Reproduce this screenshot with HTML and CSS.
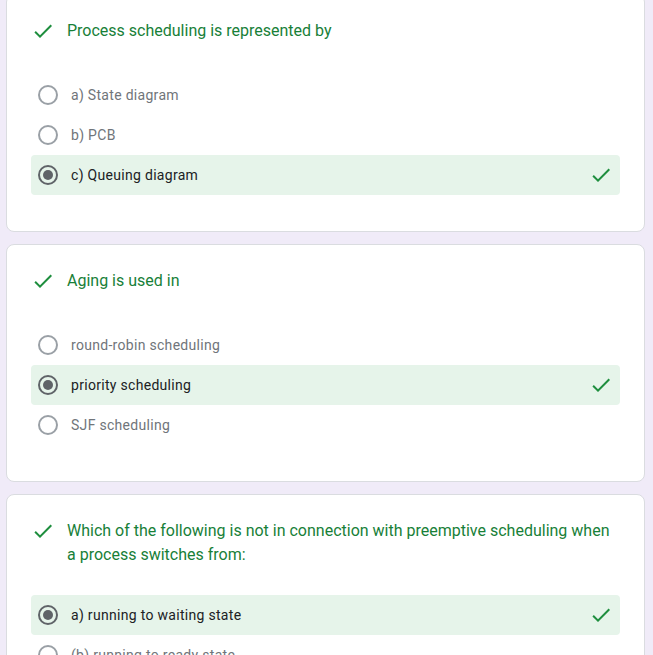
FILE: index.html
```html
<!DOCTYPE html>
<html lang="en">
<head>
<meta charset="utf-8">
<title>Quiz results</title>
<link rel="stylesheet" href="styles.css">
</head>
<body>
<main class="page">
  <section class="card">
    <div class="title">
      <svg class="check" viewBox="0 0 24 24"><path d="M9 16.17L4.83 12l-1.42 1.41L9 19 21 7l-1.41-1.41z"/></svg>
      <span class="title-text">Process scheduling is represented by</span>
    </div>
    <div class="options">
      <div class="option"><span class="radio"></span><span class="label">a) State diagram</span></div>
      <div class="option"><span class="radio"></span><span class="label">b) PCB</span></div>
      <div class="option correct"><span class="radio on"></span><span class="label">c) Queuing diagram</span>
        <svg class="check right" viewBox="0 0 24 24"><path d="M9 16.17L4.83 12l-1.42 1.41L9 19 21 7l-1.41-1.41z"/></svg></div>
    </div>
  </section>

  <section class="card">
    <div class="title">
      <svg class="check" viewBox="0 0 24 24"><path d="M9 16.17L4.83 12l-1.42 1.41L9 19 21 7l-1.41-1.41z"/></svg>
      <span class="title-text">Aging is used in</span>
    </div>
    <div class="options">
      <div class="option"><span class="radio"></span><span class="label">round-robin scheduling</span></div>
      <div class="option correct"><span class="radio on"></span><span class="label">priority scheduling</span>
        <svg class="check right" viewBox="0 0 24 24"><path d="M9 16.17L4.83 12l-1.42 1.41L9 19 21 7l-1.41-1.41z"/></svg></div>
      <div class="option"><span class="radio"></span><span class="label">SJF scheduling</span></div>
    </div>
  </section>

  <section class="card">
    <div class="title multi">
      <svg class="check" viewBox="0 0 24 24"><path d="M9 16.17L4.83 12l-1.42 1.41L9 19 21 7l-1.41-1.41z"/></svg>
      <span class="title-text">Which of the following is not in connection with preemptive scheduling when a process switches from:</span>
    </div>
    <div class="options">
      <div class="option correct"><span class="radio on"></span><span class="label">a) running to waiting state</span>
        <svg class="check right" viewBox="0 0 24 24"><path d="M9 16.17L4.83 12l-1.42 1.41L9 19 21 7l-1.41-1.41z"/></svg></div>
      <div class="option"><span class="radio"></span><span class="label">(b) running to ready state</span></div>
      <div class="option"><span class="radio"></span><span class="label">(c) waiting to ready</span></div>
      <div class="option"><span class="radio"></span><span class="label">d) running to terminated state</span></div>
    </div>
  </section>
</main>
</body>
</html>
```

FILE: styles.css
```css
html, body {
  margin: 0;
  padding: 0;
  background: #f0ebf8;
  font-family: Roboto, "Noto Sans", Arial, sans-serif;
  overflow: hidden;
}

.page {
  display: flex;
  flex-direction: column;
  gap: 12px;
  margin: -6px 8px 0 6px;
}

.card {
  background: #fff;
  border: 1px solid #dadce0;
  border-radius: 8px;
  padding: 24px 24px 36px 24px;
}

.title {
  display: flex;
  align-items: flex-start;
  gap: 12px;
  margin-bottom: 32px;
  padding-right: 8px;
}

.title.multi {
  margin-bottom: 28px;
}

.title-text {
  font-size: 16px;
  line-height: 24px;
  color: #188038;
}

.check {
  width: 24px;
  height: 24px;
  flex: none;
  fill: #1e8e3e;
}

.options {
  display: flex;
  flex-direction: column;
}

.option {
  display: flex;
  align-items: center;
  height: 40px;
  padding: 0 7px;
  border-radius: 4px;
}

.option.correct {
  background: #e6f4ea;
}

.radio {
  box-sizing: border-box;
  width: 20px;
  height: 20px;
  border: 2px solid #9aa0a6;
  border-radius: 50%;
  flex: none;
  display: flex;
  align-items: center;
  justify-content: center;
}

.radio.on {
  border-color: #5f6368;
}

.radio.on::after {
  content: "";
  width: 10px;
  height: 10px;
  border-radius: 50%;
  background: #5f6368;
}

.label {
  margin-left: 13px;
  font-size: 14px;
  line-height: 20px;
  color: #70757a;
  flex: 1;
  letter-spacing: 0.3px;
}

.option.correct .label {
  color: #202124;
}

.check.right {
  margin-left: auto;
}
```
